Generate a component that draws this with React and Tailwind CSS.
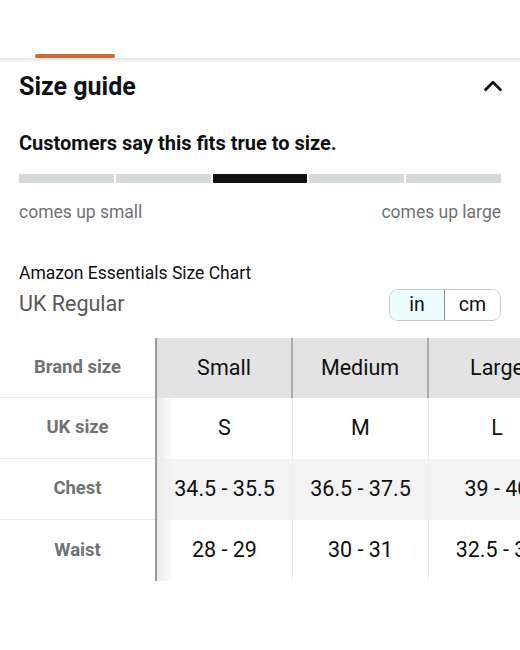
import { ChevronUp } from 'lucide-react';

const rows = [
 { label: 'UK size', cells: ['S', 'M', 'L'], bg: 'bg-white' },
 { label: 'Chest', cells: ['34.5 - 35.5', '36.5 - 37.5', '39 - 40'], bg: 'bg-[#f3f3f3]' },
 { label: 'Waist', cells: ['28 - 29', '30 - 31', '32.5 - 34'], bg: 'bg-white' },
];

const sizes = ['Small', 'Medium', 'Large'];

export default function App() {
 return (
 <div className="w-[520px] h-[650px] bg-white overflow-hidden text-[#0f1111]" style={{ fontFamily: 'Roboto, "Noto Sans", sans-serif' }}>
 {/* tab strip */}
 <div className="h-[54px]" />
 <div className="relative h-[4px]">
 <div className="absolute left-[35px] top-0 w-[80px] h-[4px] bg-[#d4682c] rounded-sm" />
 </div>
 <div className="h-[5px] bg-gradient-to-b from-[#e4e4e4] to-white" />

 {/* header */}
 <div className="flex items-center justify-between px-[19px] mt-[8px] h-[30px]">
 <h2 className="text-[25px] font-bold leading-none">Size guide</h2>
 <ChevronUp className="w-[30px] h-[30px] mr-[-7px]" strokeWidth={2.2} />
 </div>

 <div className="px-[19px] mt-[32px] text-[20px] font-bold leading-none">Customers say this fits true to size.</div>

 <div className="px-[19px] mt-[21px] flex gap-[2px]">
 {[0, 1, 2, 3, 4].map(i => (
 <div key={i} className={`flex-1 h-[9px] ${i === 2 ? 'bg-[#111]' : 'bg-[#d5d9d9]'}`} />
 ))}
 </div>

 <div className="px-[19px] mt-[21px] flex justify-between text-[17.5px] text-[#6f7373] leading-none">
 <span>comes up small</span>
 <span>comes up large</span>
 </div>

 <div className="px-[19px] mt-[43px] text-[17.5px] leading-none">Amazon Essentials Size Chart</div>
 <div className="px-[19px] mt-[4px] flex items-center justify-between">
 <span className="text-[21.5px] text-[#565959] leading-none">UK Regular</span>
 <div className="flex h-[32px] rounded-[9px] border border-[#c7cbcb] overflow-hidden text-[19.5px] mt-[3px]">
 <div className="w-[55px] flex items-center justify-center bg-[#edfdff] border-r border-[#8a9090]">in</div>
 <div className="w-[55px] flex items-center justify-center bg-white">cm</div>
 </div>
 </div>

 {/* table */}
 <div className="mt-[17px] flex flex-col overflow-hidden">
 <div className="flex h-[60px]">
 <div className="w-[155px] shrink-0 flex items-center justify-center text-[18.5px] font-bold text-[#6f7373] border-b border-[#ececec]">Brand size</div>
 <div className="w-[2px] shrink-0 bg-[#9a9a9a]" />
 {sizes.map((s, i) => (
 <div key={s} className={`w-[136px] shrink-0 flex items-center justify-center text-[21.5px] bg-[#e3e3e3] ${i < 2 ? 'border-r-2 border-[#a9a9a9]' : ''}`}>{s}</div>
 ))}
 </div>
 {rows.map((r, ri) => (
 <div key={r.label} className="flex h-[61px]">
 <div className={`w-[155px] shrink-0 flex items-center justify-center text-[18.5px] font-bold text-[#6f7373] ${ri < 2 ? 'border-b border-[#ececec]' : ''}`}>{r.label}</div>
 <div className="w-[2px] shrink-0 bg-[#9a9a9a]" />
 {r.cells.map((c, i) => (
 <div key={i} className={`w-[136px] shrink-0 flex items-center justify-center text-[21.5px] ${r.bg} ${i < 2 ? 'border-r border-[#ededed]' : ''} ${i === 0 ? 'bg-gradient-to-r from-[#ebebeb] via-transparent via-[12%]' : ''}`}>{c}</div>
 ))}
 </div>
 ))}
 </div>
 </div>
 );
}
